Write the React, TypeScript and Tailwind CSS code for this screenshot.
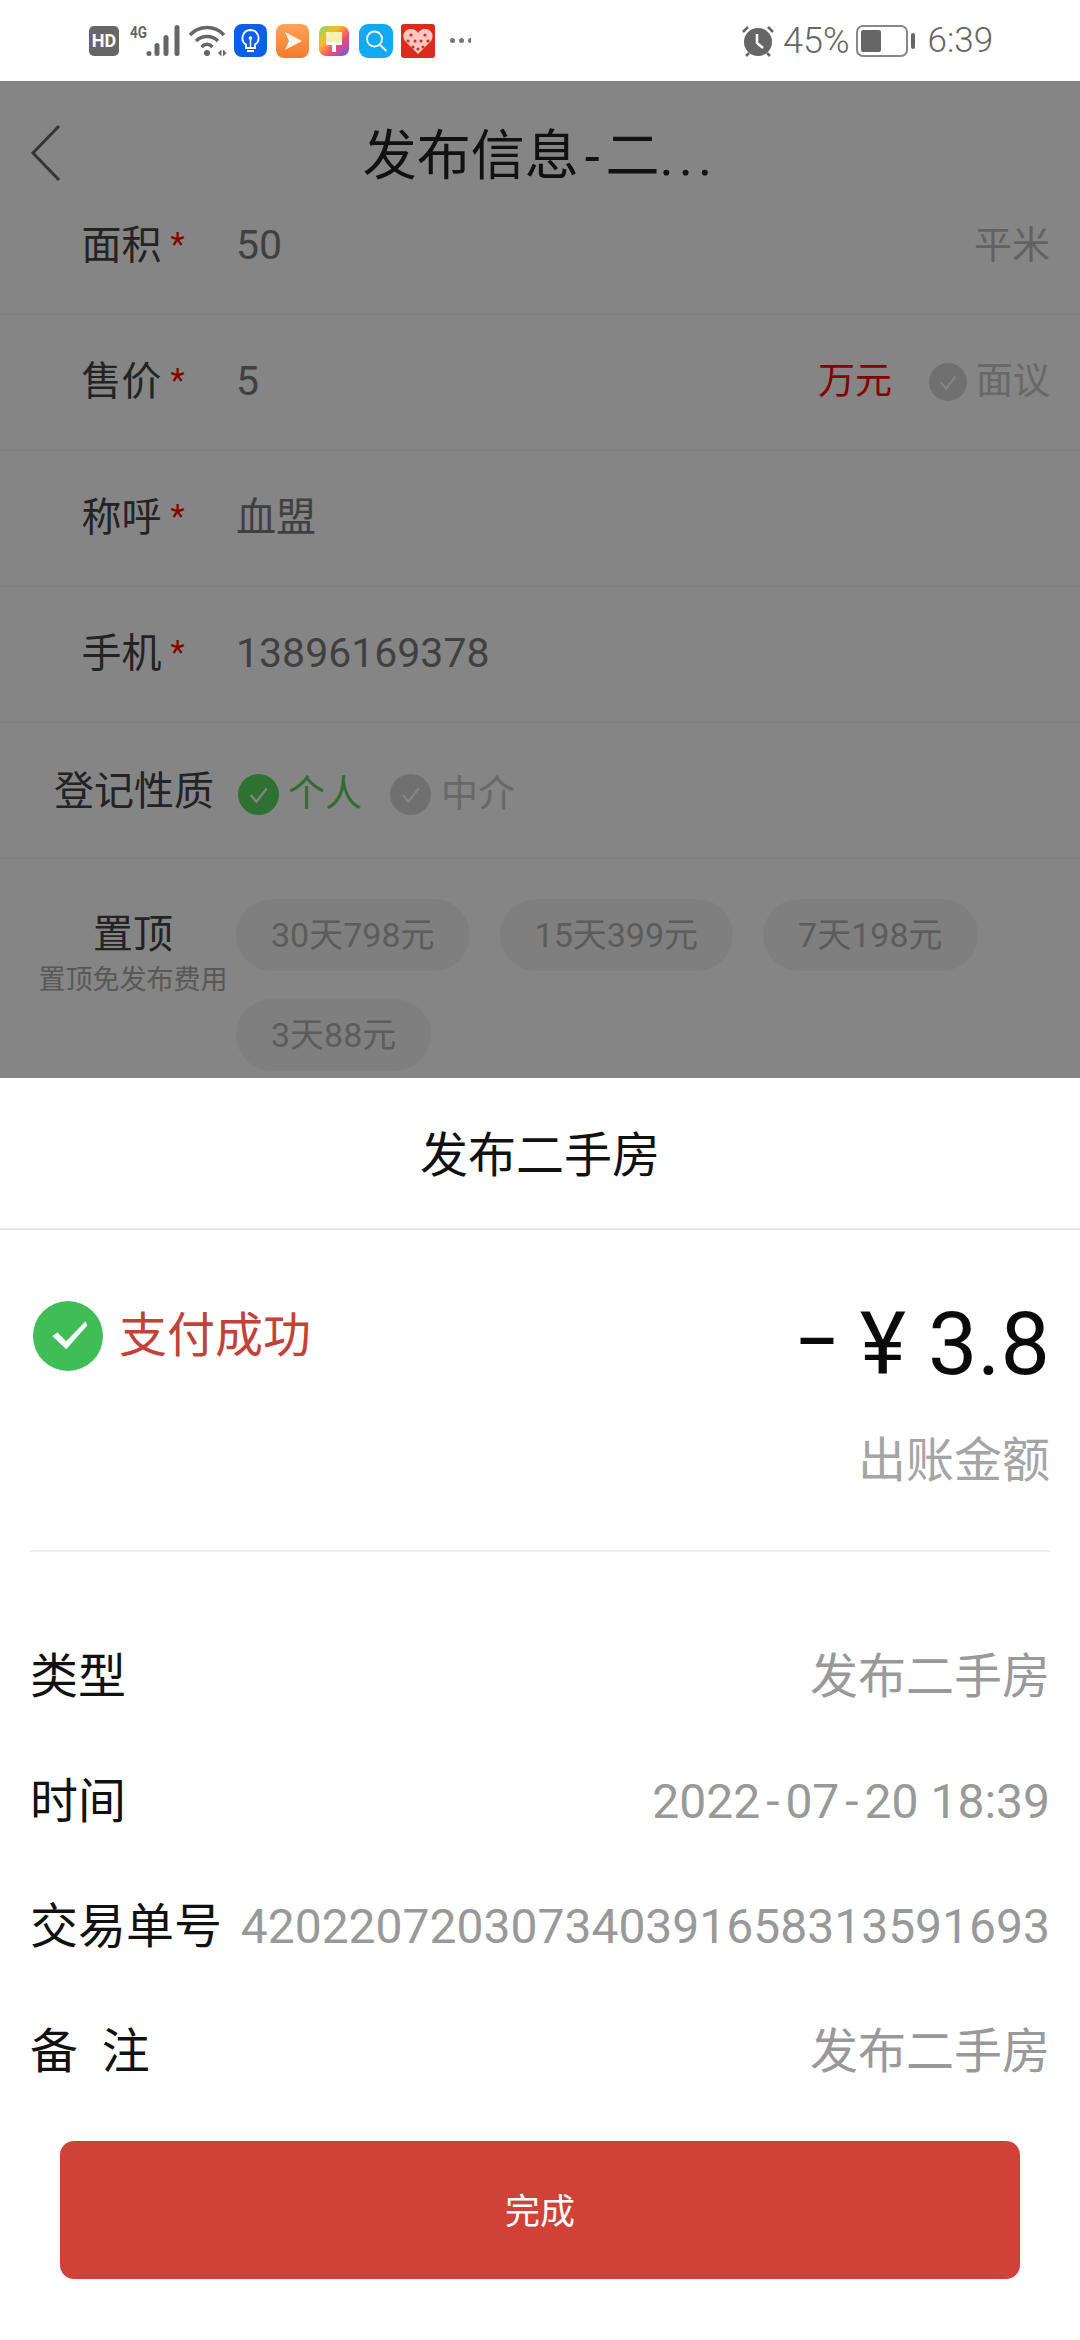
const Check = ({ bg, size }: { bg: string; size: number }) => (
  <svg width={size} height={size} viewBox="0 0 40 40" className="shrink-0">
    <circle cx="20" cy="20" r="20" fill={bg} />
    <path d="M12.5 20.5l5.5 6.5 10-13" fill="none" stroke="#fff" strokeWidth="2.2" />
  </svg>
);

const PaidCheck = () => (
  <svg width="70" height="70" viewBox="0 0 40 40" className="shrink-0">
    <circle cx="20" cy="20" r="20" fill="#41bd58" />
    <path d="M11 20l3-2 5 5 11-11.500 1 2.500-12 13.500z" fill="#fff" />
  </svg>
);

const StatusBar = () => (
  <div className="flex h-[81px] items-center bg-white pl-[89px] text-[#666666]">
    <div className="flex h-[30px] w-[30px] items-center justify-center rounded-[5px] bg-[#666666] text-[18px] font-bold leading-[30px] text-white">
      HD
    </div>
    <svg width="52" height="40" viewBox="0 -4 52 40" className="ml-[11px]">
      <text x="0" y="13" fontSize="17" fontWeight="700" fill="#666" fontFamily="Roboto" textLength="17" lengthAdjust="spacingAndGlyphs">4G</text>
      <circle cx="19" cy="28.5" r="2.5" fill="#666" />
      <rect x="24.5" y="18" width="5" height="13" rx="2.5" fill="#666" />
      <rect x="33.5" y="10" width="5" height="21" rx="2.5" fill="#666" />
      <rect x="44.500" y="0" width="5" height="31" rx="2.5" fill="#666" />
    </svg>
    <svg width="38" height="32" viewBox="0 0 38 32" className="ml-[7px]">
      <g fill="none" stroke="#666" strokeWidth="3.4">
        <path d="M1 10C10 0 26 0 35 10" />
        <path d="M7 16c6-6 16-6 22 0" />
        <path d="M12.5 22c3.5-3.5 7.5-3.5 11 0" />
      </g>
      <circle cx="18" cy="28" r="3" fill="#666" />
      <path d="M29 28l3.5-3.5V31.500zM34 24.500l3.500 3.500-3.500 3.500z" fill="#666" />
    </svg>
    <svg width="33" height="33" viewBox="0 0 33 33" className="ml-[7px]">
      <rect width="33" height="33" rx="8" fill="#0b5fe8" />
      <path d="M16.500 6a8 8 0 0 0-4.500 14.600V24h9v-3.400A8 8 0 0 0 16.500 6zM13 27h7" fill="none" stroke="#fff" strokeWidth="1.800" />
      <circle cx="16.500" cy="14" r="1.800" fill="#fff" />
      <path d="M16.500 14v9" stroke="#fff" strokeWidth="1.500" />
    </svg>
    <svg width="33" height="34" viewBox="0 0 33 34" className="ml-[9px]">
      <defs>
        <linearGradient id="orange" x1="0" y1="0" x2="0" y2="1">
          <stop offset="0" stopColor="#fca35a" />
          <stop offset="1" stopColor="#f47b2b" />
        </linearGradient>
      </defs>
      <rect width="33" height="34" rx="8" fill="url(#orange)" />
      <path d="M9 8l17 9-17 9 4-9z" fill="#fff" fillOpacity=".9" />
    </svg>
    <svg width="30" height="30" viewBox="0 0 30 30" className="ml-[10px]">
      <defs>
        <linearGradient id="rainbow" x1="0" y1="0" x2="1" y2="1">
          <stop offset="0" stopColor="#7bdc6a" />
          <stop offset=".35" stopColor="#fdb92e" />
          <stop offset=".65" stopColor="#f0487a" />
          <stop offset="1" stopColor="#5b5cf0" />
        </linearGradient>
      </defs>
      <rect width="30" height="30" rx="7" fill="url(#rainbow)" />
      <path d="M7 6h16v10H7z" fill="#fdf0b0" />
      <path d="M7 16h16v3h-6v7h-4v-7H7z" fill="#fff" />
    </svg>
    <svg width="34" height="34" viewBox="0 0 34 34" className="ml-[10px]">
      <rect width="34" height="34" rx="9" fill="#10aaf5" />
      <circle cx="15.500" cy="15" r="7.500" fill="none" stroke="#fff" strokeWidth="1.800" />
      <path d="M21 21l6.500 6" stroke="#fff" strokeWidth="1.800" />
    </svg>
    <svg width="34" height="34" viewBox="0 0 34 34" className="ml-[8px]">
      <rect width="34" height="34" rx="3" fill="#dd2a1f" />
      <path d="M17 30L4 17c-4-6 0-12 6-12 3 0 5 1 7 4 2-3 4-4 7-4 6 0 10 6 6 12z" fill="#f7c9c3" />
      <g fill="#dd2a1f">
        <circle cx="10" cy="11" r="1.600" />
        <circle cx="24" cy="11" r="1.600" />
        <circle cx="7" cy="17" r="1.600" />
        <circle cx="14" cy="17" r="1.600" />
        <circle cx="20" cy="17" r="1.600" />
        <circle cx="27" cy="17" r="1.600" />
        <circle cx="12" cy="23" r="1.600" />
        <circle cx="17" cy="25" r="1.600" />
        <circle cx="22" cy="23" r="1.600" />
      </g>
    </svg>
    <div className="ml-[15px] flex gap-[4px]">
      <span className="h-[5px] w-[5px] rounded-full bg-[#777777]" />
      <span className="h-[5px] w-[5px] rounded-full bg-[#777777]" />
      <span className="h-[5px] w-[3px] rounded-l-full bg-[#777777]" />
    </div>
    <svg width="32" height="32" viewBox="0 0 32 32" className="ml-[271px]">
      <circle cx="16" cy="17" r="14" fill="#666" />
      <path d="M1 7l5-5M31 7l-5-5M4 31l3-3M28 31l-3-3" stroke="#666" strokeWidth="2.500" />
      <path d="M15 9v9l6 5" fill="none" stroke="#fff" strokeWidth="2.500" />
    </svg>
    <span className="ml-[9px] text-[36px] font-light leading-none">45%</span>
    <div className="ml-[6px] flex h-[32px] w-[52px] items-center rounded-[7px] border-[2.500px] border-[#888888] p-[3px]">
      <div className="h-full w-[20px] rounded-[2px] bg-[#666666]" />
    </div>
    <span className="ml-[3px] h-[16px] w-[4px] rounded-full bg-[#666666]" />
    <span className="ml-[13px] text-[35px] font-light leading-none">6:39</span>
  </div>
);

const Row = ({ label, children }: { label: string; children: React.ReactNode }) => (
  <div className="flex h-[136px] items-center border-b border-[#f6f6f6] pb-[2px] pr-[30px]">
    <div className="flex w-[236px] shrink-0 items-center justify-center pl-[30px] text-[40px] leading-none text-[#444444]">
      {label}
      <span className="ml-[9px] mt-[-2px] text-[33px] text-[#ff0000]">*</span>
    </div>
    {children}
  </div>
);

const Pill = ({ text }: { text: string }) => (
  <span className="flex h-[72px] items-center rounded-full bg-[#f4f4f4] px-[35px] text-[34px] leading-none text-[#b0b0b0]">
    {text}
  </span>
);

const Form = () => (
  <div className="bg-white">
    <div className="relative flex h-[98px] items-center justify-center pt-[54px] text-[54px] leading-none text-[#222222]">
      <svg width="32" height="58" viewBox="0 0 32 58" className="absolute left-[30px] top-[43px]">
        <path d="M29 2L3 29l26 27" fill="none" stroke="#666666" strokeWidth="3" />
      </svg>
      发布信息
      <span className="mx-[6px]">-</span>二
      <span className="tracking-[5px]">...</span>
    </div>
    <Row label="面积">
      <span className="flex-1 text-[41px] text-[#7c7c7c]">50</span>
      <span className="text-[38px] text-[#bdbdbd]">平米</span>
    </Row>
    <Row label="售价">
      <span className="flex-1 text-[41px] text-[#7c7c7c]">5</span>
      <span className="text-[37px] text-[#ff0000]">万元</span>
      <span className="ml-[37px]">
        <Check bg="#d6d6d6" size={38} />
      </span>
      <span className="ml-[9px] text-[37px] text-[#c8c8c8]">面议</span>
    </Row>
    <Row label="称呼">
      <span className="text-[40px] text-[#7c7c7c]">血盟</span>
    </Row>
    <Row label="手机">
      <span className="text-[41px] text-[#7c7c7c]">13896169378</span>
    </Row>
    <div className="flex h-[136px] items-center border-b border-[#f6f6f6] pt-[8px]">
      <div className="flex w-[238px] shrink-0 items-center justify-center pl-[30px] pb-[6px] text-[40px] leading-none text-[#444444]">
        登记性质
      </div>
      <Check bg="#58d861" size={41} />
      <span className="ml-[9px] text-[37px] text-[#5ed065]">个人</span>
      <span className="ml-[28px]">
        <Check bg="#d6d6d6" size={41} />
      </span>
      <span className="ml-[10px] text-[37px] text-[#c8c8c8]">中介</span>
    </div>
    <div className="flex pt-[40px]">
      <div className="w-[236px] shrink-0 pl-[30px] pt-[16px] text-center leading-none">
        <p className="text-[40px] text-[#444444]">置顶</p>
        <p className="mt-[12px] whitespace-nowrap text-[27px] text-[#aaaaaa]">置顶免发布费用</p>
      </div>
      <div className="flex flex-wrap gap-x-[30px] gap-y-[28px]">
        <Pill text="30天798元" />
        <Pill text="15天399元" />
        <Pill text="7天198元" />
        <Pill text="3天88元" />
      </div>
    </div>
  </div>
);

const Detail = ({ label, children }: { label: string; children: React.ReactNode }) => (
  <div className="flex h-[125px] items-center justify-between text-[48px]">
    <span className="text-[#111111]">{label}</span>
    <span className="text-[#999999]">{children}</span>
  </div>
);

const Sheet = () => (
  <div className="flex-1 bg-white">
    <div className="flex h-[152px] items-center justify-center border-b-2 border-[#e8e8e8] pt-[5px] text-[48px] text-[#111111]">
      发布二手房
    </div>
    <div className="mx-[30px] h-[322px] border-b-2 border-[#eeeeee] pt-[70px]">
      <div className="flex items-start justify-between">
        <div className="flex items-center pl-[3px]">
          <PaidCheck />
          <span className="ml-[16px] text-[48px] text-[#c2423a]">支付成功</span>
        </div>
        <span className="mt-[-12px] text-[88px] leading-[108px] text-[#0a0a0a]">
          <span className="mr-[22px] align-[10px] text-[66px] font-medium">–</span>¥ 3.8
        </span>
      </div>
      <p className="mt-[27px] text-right text-[48px] text-[#a5a5a5]">出账金额</p>
    </div>
    <div className="px-[30px] pt-[62px]">
      <Detail label="类型">发布二手房</Detail>
      <Detail label="时间">
        2022<span className="mx-[6px]">-</span>07<span className="mx-[6px]">-</span>20 18:39
      </Detail>
      <Detail label="交易单号">420220720307340391658313591693</Detail>
      <Detail label="备&nbsp;&nbsp;注">发布二手房</Detail>
    </div>
    <button className="mx-[60px] mt-[27px] flex h-[138px] w-[960px] items-center justify-center rounded-[14px] bg-[#d04238] pt-[7px] text-[35px] text-white">
      完成
    </button>
  </div>
);

export default function App() {
  return (
    <div className="flex h-[2340px] w-[1080px] flex-col overflow-hidden bg-white font-['Roboto','Noto_Sans_CJK_SC',sans-serif]">
      <StatusBar />
      <div className="relative h-[997px] shrink-0 overflow-hidden">
        <Form />
        <div className="absolute inset-0 bg-black/48" />
      </div>
      <Sheet />
    </div>
  );
}
